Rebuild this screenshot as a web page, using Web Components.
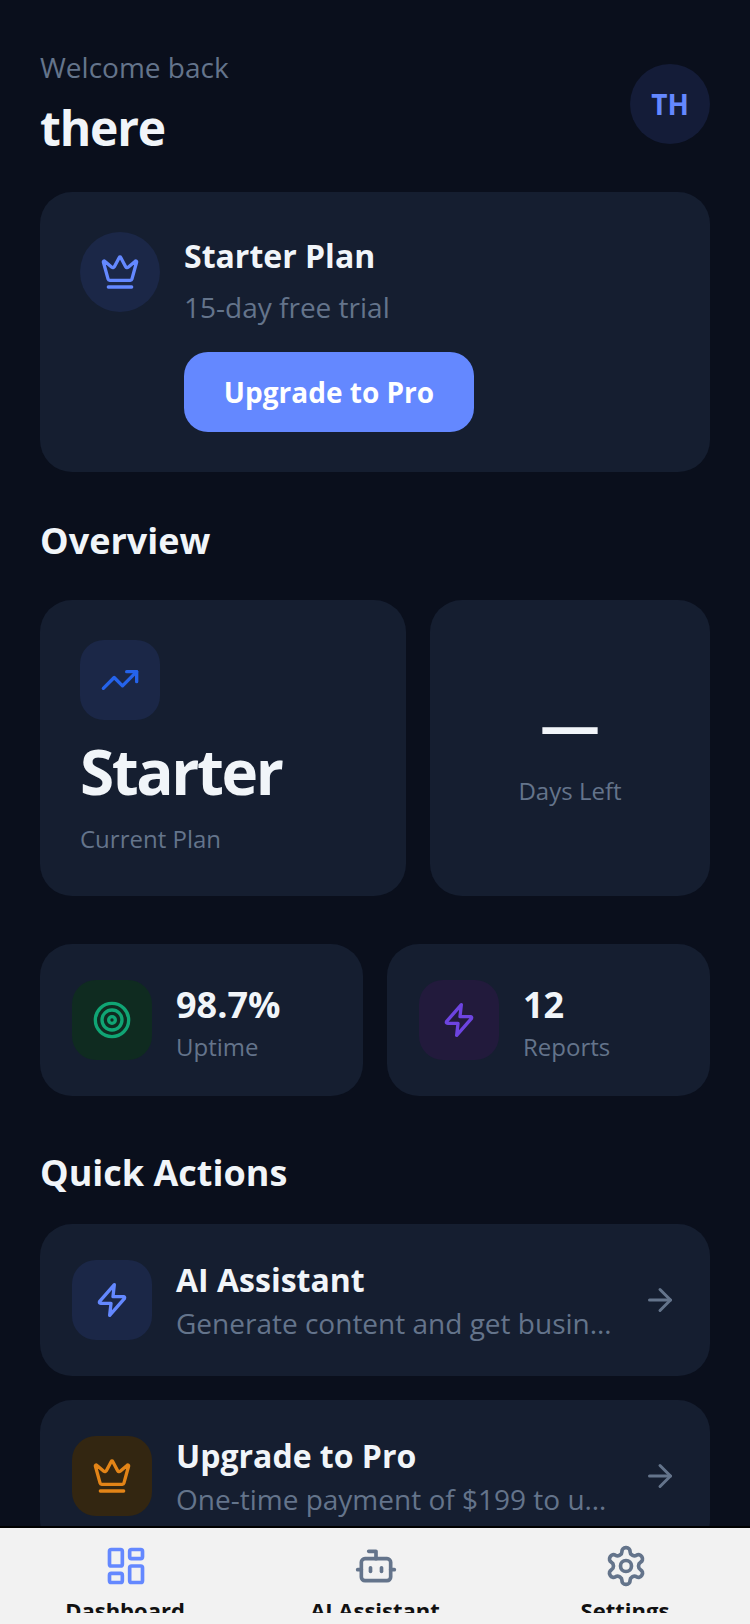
<!DOCTYPE html>
<html>
<head>
<meta charset="utf-8">
<title>Dashboard</title>
<style>
  html, body { margin: 0; padding: 0; background: #0a0f1c; }
  body { font-family: "Open Sans", "Noto Sans", sans-serif; }
</style>
</head>
<body>
<app-shell>
  <welcome-header greeting="Welcome back" name="there" initials="TH"></welcome-header>
  <plan-card title="Starter Plan" note="15-day free trial" action="Upgrade to Pro"></plan-card>
  <section-title top="45" bottom="35">Overview</section-title>
  <card-row columns="366px 280px">
    <stat-card value="Starter" label="Current Plan"></stat-card>
    <days-card value="—" label="Days Left"></days-card>
  </card-row>
  <card-row columns="323px 323px" top="48">
    <mini-stat icon="target" color="#10a574" tint="#0f2b20" value="98.7%" label="Uptime"></mini-stat>
    <mini-stat icon="zap" color="#6d44e0" tint="#221a3c" value="12" label="Reports"></mini-stat>
  </card-row>
  <section-title top="53" bottom="27">Quick Actions</section-title>
  <action-row icon="zap" color="#6488ff" tint="#1b2747" title="AI Assistant" note="Generate content and get business insights"></action-row>
  <action-row icon="crown" color="#e38417" tint="#332611" title="Upgrade to Pro" note="One-time payment of $199 to unlock everything"></action-row>
  <bottom-nav slot="nav">
    <nav-item icon="dashboard" active>Dashboard</nav-item>
    <nav-item icon="bot">AI Assistant</nav-item>
    <nav-item icon="settings">Settings</nav-item>
  </bottom-nav>
</app-shell>

<script>
const ICONS = {
  crown: '<path d="M11.562 3.266a.5.5 0 0 1 .876 0L15.39 8.87a1 1 0 0 0 1.516.294L21.183 5.5a.5.5 0 0 1 .798.519l-2.834 10.246a1 1 0 0 1-.956.734H5.81a1 1 0 0 1-.957-.734L2.02 6.02a.5.5 0 0 1 .798-.519l4.276 3.664a1 1 0 0 0 1.516-.294z"/><path d="M5 21h14"/>',
  trending: '<polyline points="22 7 13.5 15.5 8.5 10.5 2 17"/><polyline points="16 7 22 7 22 13"/>',
  target: '<circle cx="12" cy="12" r="10"/><circle cx="12" cy="12" r="6"/><circle cx="12" cy="12" r="2"/>',
  zap: '<path d="M13.4 2.8 4.6 12.8Q4 14 5.2 14H11.4L10.6 21.2 19.4 11.2Q20 10 18.8 10H12.6Z"/>',
  arrow: '<path d="M5 12h14"/><path d="m12 5 7 7-7 7"/>',
  dashboard: '<rect width="7" height="9" x="3" y="3" rx="1"/><rect width="7" height="5" x="14" y="3" rx="1"/><rect width="7" height="9" x="14" y="12" rx="1"/><rect width="7" height="5" x="3" y="16" rx="1"/>',
  bot: '<path d="M12 8V4H8"/><rect width="16" height="12" x="4" y="8" rx="2"/><path d="M2 14h2"/><path d="M20 14h2"/><path d="M15 13v2"/><path d="M9 13v2"/>',
  settings: '<path d="M12.22 2h-.44a2 2 0 0 0-2 2v.18a2 2 0 0 1-1 1.73l-.43.25a2 2 0 0 1-2 0l-.15-.08a2 2 0 0 0-2.73.73l-.22.38a2 2 0 0 0 .73 2.73l.15.1a2 2 0 0 1 1 1.72v.51a2 2 0 0 1-1 1.74l-.15.09a2 2 0 0 0-.73 2.73l.22.38a2 2 0 0 0 2.73.73l.15-.08a2 2 0 0 1 2 0l.43.25a2 2 0 0 1 1 1.73V20a2 2 0 0 0 2 2h.44a2 2 0 0 0 2-2v-.18a2 2 0 0 1 1-1.73l.43-.25a2 2 0 0 1 2 0l.15.08a2 2 0 0 0 2.73-.73l.22-.39a2 2 0 0 0-.73-2.73l-.15-.08a2 2 0 0 1-1-1.74v-.5a2 2 0 0 1 1-1.74l.15-.09a2 2 0 0 0 .73-2.73l-.22-.38a2 2 0 0 0-2.73-.73l-.15.08a2 2 0 0 1-2 0l-.43-.25a2 2 0 0 1-1-1.73V4a2 2 0 0 0-2-2z"/><circle cx="12" cy="12" r="3"/>'
};

function iconSvg(name, size, color) {
  return `<svg width="${size}" height="${size}" viewBox="0 0 24 24" fill="none" stroke="${color}" stroke-width="2" stroke-linecap="round" stroke-linejoin="round">${ICONS[name]}</svg>`;
}

// small helper so each element only has to hand over its style and markup
class ShadowElement extends HTMLElement {
  constructor() {
    super();
    this.attachShadow({ mode: "open" });
  }
  connectedCallback() {
    this.shadowRoot.innerHTML = `<style>${this.css()}</style>${this.html()}`;
  }
  attr(name) {
    return this.getAttribute(name) || "";
  }
}

class AppShell extends ShadowElement {
  css() {
    return `
      :host { display: flex; flex-direction: column; width: 750px; height: 1624px; overflow: hidden; background: #0a0f1c; }
      main { display: block; flex: 1; min-height: 0; overflow: hidden; padding: 48px 40px 0; }
    `;
  }
  html() {
    return `<main><slot></slot></main><slot name="nav"></slot>`;
  }
}

class CardRow extends ShadowElement {
  css() {
    return `:host { display: grid; grid-template-columns: ${this.attr("columns")}; gap: 24px; margin-top: ${this.attr("top") || 0}px; }`;
  }
  html() {
    return `<slot></slot>`;
  }
}

class WelcomeHeader extends ShadowElement {
  css() {
    return `
      :host { display: flex; justify-content: space-between; align-items: center; height: 112px; margin-bottom: 32px; }
      .left { align-self: flex-start; }
      .hello { font-size: 28px; line-height: 38px; color: #64748b; }
      .name { font-size: 48px; line-height: 66px; margin-top: 9px; font-weight: 700; letter-spacing: -1.2px; color: #f1f5f9; }
      .avatar { width: 80px; height: 80px; border-radius: 50%; background: #141c38; color: #6488ff; font-size: 28px; font-weight: 700; display: flex; align-items: center; justify-content: center; }
    `;
  }
  html() {
    return `
      <div class="left">
        <div class="hello">${this.attr("greeting")}</div>
        <div class="name">${this.attr("name")}</div>
      </div>
      <div class="avatar">${this.attr("initials")}</div>`;
  }
}

class PlanCard extends ShadowElement {
  css() {
    return `
      :host { display: flex; gap: 24px; padding: 40px; height: 280px; box-sizing: border-box; border-radius: 32px; background: #151e30; }
      .badge { width: 80px; height: 80px; flex: none; border-radius: 50%; background: #1b2747; display: flex; align-items: center; justify-content: center; }
      h2 { margin: 2px 0 0; font-size: 32px; line-height: 44px; font-weight: 700; color: #f1f5f9; }
      p { margin: 10px 0 26px; font-size: 28px; line-height: 38px; color: #64748b; }
      button { display: block; width: 290px; height: 80px; border: 0; border-radius: 24px; background: #6488ff; color: #fff; font: 700 28px "Open Sans", sans-serif; }
    `;
  }
  html() {
    return `
      <div class="badge">${iconSvg("crown", 40, "#6488ff")}</div>
      <div>
        <h2>${this.attr("title")}</h2>
        <p>${this.attr("note")}</p>
        <button>${this.attr("action")}</button>
      </div>`;
  }
}

class SectionTitle extends ShadowElement {
  css() {
    return `:host { display: block; font-size: 36px; line-height: 48px; height: 48px; margin: ${this.attr("top")}px 0 ${this.attr("bottom")}px; font-weight: 700; color: #f1f5f9; }`;
  }
  html() {
    return `<slot></slot>`;
  }
}

class StatCard extends ShadowElement {
  css() {
    return `
      :host { display: block; height: 296px; box-sizing: border-box; padding: 40px; border-radius: 32px; background: #151e30; }
      .box { width: 80px; height: 80px; border-radius: 24px; background: #1b2747; display: flex; align-items: center; justify-content: center; }
      .value { font-size: 62px; line-height: 88px; font-weight: 700; letter-spacing: -2.4px; color: #f1f5f9; margin-top: 7px; }
      .label { font-size: 24px; line-height: 32px; color: #64748b; margin-top: 8px; }
    `;
  }
  html() {
    return `
      <div class="box">${iconSvg("trending", 40, "#2563eb")}</div>
      <div class="value">${this.attr("value")}</div>
      <div class="label">${this.attr("label")}</div>`;
  }
}

class DaysCard extends ShadowElement {
  css() {
    return `
      :host { display: flex; flex-direction: column; align-items: center; justify-content: center; height: 296px; box-sizing: border-box; padding-bottom: 4px; border-radius: 32px; background: #151e30; }
      .value { font-size: 60px; line-height: 76px; font-weight: 700; color: #f1f5f9; }
      .label { font-size: 24px; line-height: 32px; color: #64748b; margin-top: 13px; }
    `;
  }
  html() {
    return `
      <div class="value">${this.attr("value")}</div>
      <div class="label">${this.attr("label")}</div>`;
  }
}

class MiniStat extends ShadowElement {
  css() {
    return `
      :host { display: flex; align-items: center; gap: 24px; height: 152px; box-sizing: border-box; padding: 0 32px; border-radius: 32px; background: #151e30; }
      .box { width: 80px; height: 80px; flex: none; border-radius: 24px; display: flex; align-items: center; justify-content: center; }
      .text { padding-top: 6px; }
      .value { font-size: 36px; line-height: 44px; font-weight: 700; color: #f1f5f9; }
      .label { font-size: 24px; line-height: 32px; color: #64748b; margin-top: 4px; }
    `;
  }
  html() {
    return `
      <div class="box" style="background:${this.attr("tint")}">${iconSvg(this.attr("icon"), 40, this.attr("color"))}</div>
      <div class="text">
        <div class="value">${this.attr("value")}</div>
        <div class="label">${this.attr("label")}</div>
      </div>`;
  }
}

class ActionRow extends ShadowElement {
  css() {
    return `
      :host { display: flex; align-items: center; gap: 24px; height: 152px; box-sizing: border-box; padding: 0 32px; border-radius: 32px; background: #151e30; margin-bottom: 24px; }
      .box { width: 80px; height: 80px; flex: none; border-radius: 24px; display: flex; align-items: center; justify-content: center; }
      .text { flex: 1; min-width: 0; }
      .title { font-size: 32px; line-height: 44px; font-weight: 700; color: #f1f5f9; }
      .note { font-size: 28px; line-height: 38px; margin-top: 2px; color: #64748b; white-space: nowrap; overflow: hidden; text-overflow: ellipsis; }
      .go { flex: none; display: flex; margin-left: 4px; }
    `;
  }
  html() {
    return `
      <div class="box" style="background:${this.attr("tint")}">${iconSvg(this.attr("icon"), 40, this.attr("color"))}</div>
      <div class="text">
        <div class="title">${this.attr("title")}</div>
        <div class="note">${this.attr("note")}</div>
      </div>
      <div class="go">${iconSvg("arrow", 36, "#64748b")}</div>`;
  }
}

class BottomNav extends ShadowElement {
  css() {
    return `
      :host { display: block; flex: none; height: 98px; box-sizing: border-box; border-top: 2px solid #000; background: #f2f2f2; }
      .clip { display: flex; height: 85px; overflow: hidden; }
    `;
  }
  html() {
    return `<div class="clip"><slot></slot></div>`;
  }
}

class NavItem extends ShadowElement {
  css() {
    return `
      :host { display: flex; flex: 1; flex-direction: column; align-items: center; padding-top: 16px; }
      svg { display: block; flex: none; margin-left: 2px; }
      span { font-size: 22px; line-height: 32px; font-weight: 700; color: #111; margin-top: 6px; white-space: nowrap; }
    `;
  }
  html() {
    const color = this.hasAttribute("active") ? "#6488ff" : "#64748b";
    return `${iconSvg(this.attr("icon"), 44, color)}<span><slot></slot></span>`;
  }
}

customElements.define("app-shell", AppShell);
customElements.define("card-row", CardRow);
customElements.define("welcome-header", WelcomeHeader);
customElements.define("plan-card", PlanCard);
customElements.define("section-title", SectionTitle);
customElements.define("stat-card", StatCard);
customElements.define("days-card", DaysCard);
customElements.define("mini-stat", MiniStat);
customElements.define("action-row", ActionRow);
customElements.define("bottom-nav", BottomNav);
customElements.define("nav-item", NavItem);
</script>
</body>
</html>
